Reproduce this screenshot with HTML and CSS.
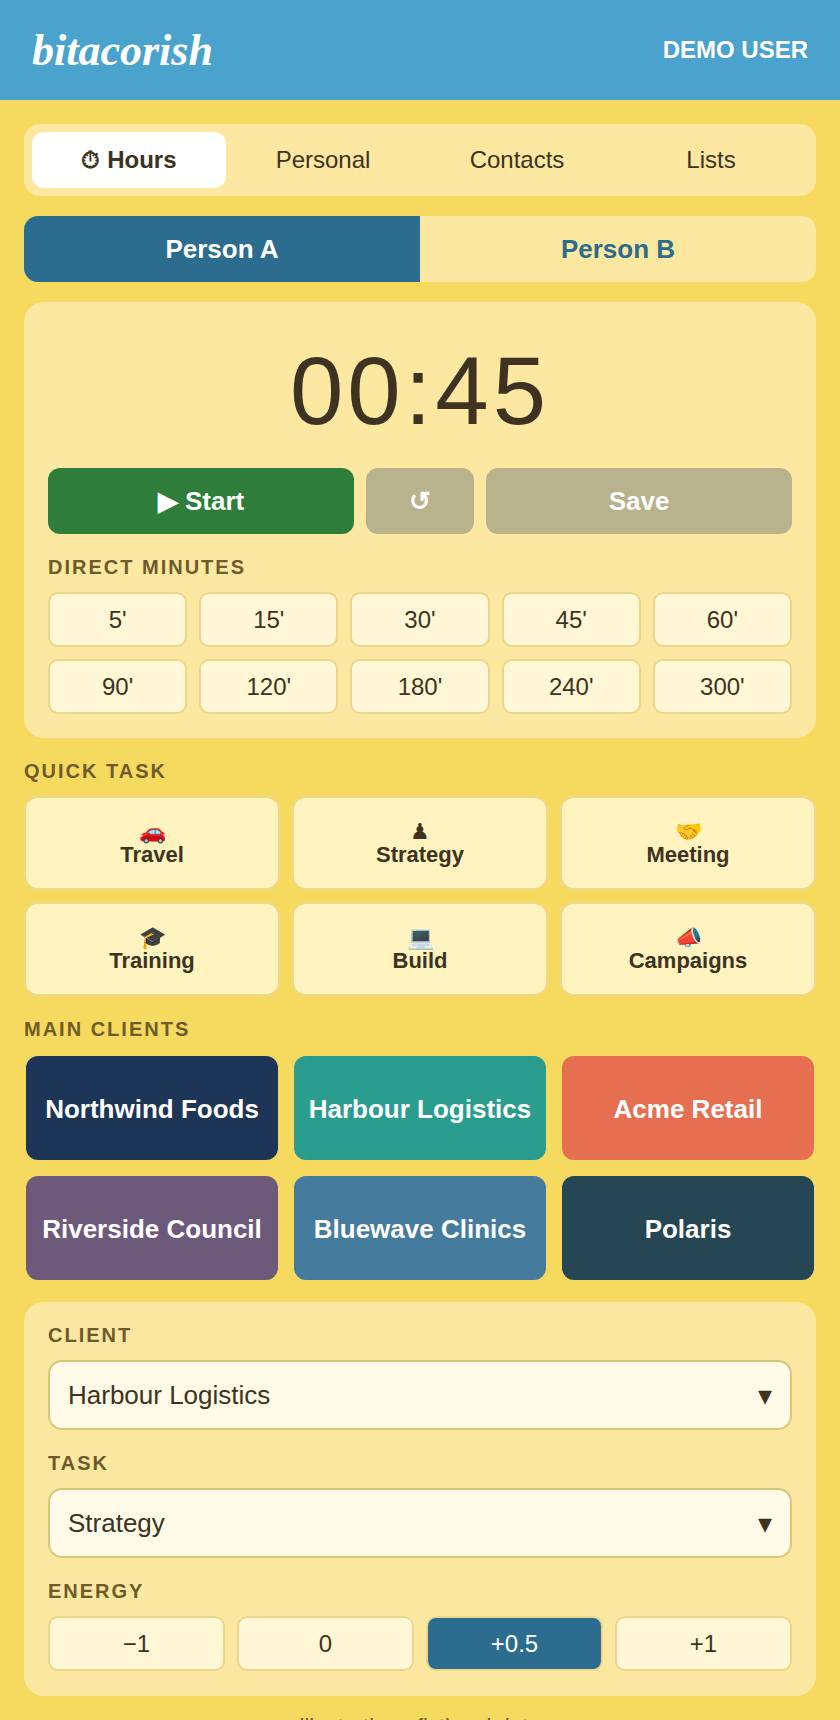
FILE: index.html
```html
<!DOCTYPE html>
<html lang="en">
<head>
  <meta charset="UTF-8" />
  <meta name="viewport" content="width=device-width, initial-scale=1.0" />
  <title>bitacorish</title>
  <link rel="stylesheet" href="styles.css">
</head>
<body>
  <header class="topbar">
    <div class="logo">bitacorish</div>
    <div class="user">DEMO USER</div>
  </header>

  <main class="page">
    <nav class="tabs">
      <a class="tab active">⏱ Hours</a>
      <a class="tab">Personal</a>
      <a class="tab">Contacts</a>
      <a class="tab">Lists</a>
    </nav>

    <div class="person-switch">
      <a class="person active">Person A</a>
      <a class="person">Person B</a>
    </div>

    <section class="card timer-card">
      <div class="timer">00:45</div>
      <div class="timer-actions">
        <button class="action start">▶ Start</button>
        <button class="action reset">↺</button>
        <button class="action save">Save</button>
      </div>
      <div class="label">DIRECT MINUTES</div>
      <div class="minutes">
        <button class="chip">5'</button>
        <button class="chip">15'</button>
        <button class="chip">30'</button>
        <button class="chip">45'</button>
        <button class="chip">60'</button>
        <button class="chip">90'</button>
        <button class="chip">120'</button>
        <button class="chip">180'</button>
        <button class="chip">240'</button>
        <button class="chip">300'</button>
      </div>
    </section>

    <div class="label">QUICK TASK</div>
    <div class="tasks">
      <button class="task"><span class="emoji">🚗</span>Travel</button>
      <button class="task"><span class="emoji">♟</span>Strategy</button>
      <button class="task"><span class="emoji">🤝</span>Meeting</button>
      <button class="task"><span class="emoji">🎓</span>Training</button>
      <button class="task"><span class="emoji">💻</span>Build</button>
      <button class="task"><span class="emoji">📣</span>Campaigns</button>
    </div>

    <div class="label">MAIN CLIENTS</div>
    <div class="clients">
      <button class="client navy">Northwind Foods</button>
      <button class="client teal">Harbour Logistics</button>
      <button class="client coral">Acme Retail</button>
      <button class="client plum">Riverside Council</button>
      <button class="client steel">Bluewave Clinics</button>
      <button class="client slate">Polaris</button>
    </div>

    <section class="card form-card">
      <div class="label">CLIENT</div>
      <div class="select"><span>Harbour Logistics</span><span class="caret">▾</span></div>
      <div class="label">TASK</div>
      <div class="select"><span>Strategy</span><span class="caret">▾</span></div>
      <div class="label">ENERGY</div>
      <div class="energy">
        <button class="chip">−1</button>
        <button class="chip">0</button>
        <button class="chip on">+0.5</button>
        <button class="chip">+1</button>
      </div>
    </section>

    <p class="note">illustrative · fictional data</p>
  </main>
</body>
</html>
```

FILE: styles.css
```css
* {
  box-sizing: border-box;
}
html, body {
  height: 100%;
}
body {
  font-family: "Liberation Sans", Arial, sans-serif;
  background-color: #f6da5f;
  color: #3d3320;
  margin: 0;
  overflow: hidden;
}
button {
  font-family: inherit;
  color: inherit;
  cursor: pointer;
}
.topbar {
  height: 100px;
  background-color: #4aa3cd;
  color: white;
  padding: 0 32px;
  display: flex;
  align-items: center;
  justify-content: space-between;
}
.logo {
  font-family: "Liberation Serif", serif;
  font-style: italic;
  font-weight: bold;
  font-size: 44px;
}
.user {
  font-size: 24px;
  font-weight: bold;
}
.page {
  padding: 24px 24px 0;
}
.tabs {
  display: grid;
  grid-template-columns: repeat(4, 1fr);
  padding: 8px;
  background-color: #fce8a0;
  border-radius: 16px;
  margin-bottom: 20px;
}
.tab {
  height: 56px;
  display: flex;
  align-items: center;
  justify-content: center;
  font-size: 24px;
  border-radius: 12px;
}
.tab.active {
  background-color: white;
  font-weight: bold;
}
.person-switch {
  display: grid;
  grid-template-columns: 1fr 1fr;
  height: 66px;
  background-color: #fce8a0;
  border-radius: 14px;
  overflow: hidden;
  margin-bottom: 20px;
}
.person {
  display: flex;
  align-items: center;
  justify-content: center;
  font-size: 26px;
  font-weight: bold;
  color: #2b6c8f;
}
.person.active {
  background-color: #2b6c8f;
  color: white;
}
.card {
  background-color: #fce8a0;
  border-radius: 20px;
  padding: 24px;
}
.timer {
  font-size: 96px;
  line-height: 110px;
  letter-spacing: 4px;
  text-align: center;
  margin: 10px 0 22px;
}
.timer-actions {
  display: grid;
  grid-template-columns: 1fr 108px 1fr;
  gap: 12px;
  margin-bottom: 20px;
}
.action {
  height: 66px;
  border: none;
  border-radius: 12px;
  color: white;
  font-size: 26px;
  font-weight: bold;
  background-color: #b8b28d;
}
.action.start {
  background-color: #2e7d3a;
}
.label {
  font-size: 20px;
  font-weight: bold;
  letter-spacing: 2px;
  color: #6e5a2a;
  line-height: 26px;
  margin-bottom: 12px;
}
.minutes {
  display: grid;
  grid-template-columns: repeat(5, 1fr);
  gap: 12px;
}
.chip {
  height: 55px;
  background-color: #fff7d6;
  border: 2px solid #ecd68c;
  border-radius: 10px;
  font-size: 24px;
}
.tasks {
  display: grid;
  grid-template-columns: repeat(3, 1fr);
  gap: 12px;
  margin-bottom: 20px;
}
.task {
  height: 94px;
  background-color: #fff3bf;
  border: 2px solid #eed98a;
  border-radius: 14px;
  font-size: 22px;
  font-weight: bold;
  line-height: 23px;
}
.emoji {
  display: block;
  font-weight: normal;
}
.timer-card {
  margin-bottom: 20px;
}
.clients {
  display: grid;
  grid-template-columns: repeat(3, 1fr);
  gap: 12px;
  margin-bottom: 20px;
}
.client {
  height: 108px;
  border: 2px solid #f6da5f;
  border-radius: 14px;
  color: white;
  font-size: 26px;
  font-weight: bold;
  padding: 2px 0 0;
}
.navy { background-color: #1d3557; }
.teal { background-color: #2a9d8f; }
.coral { background-color: #e76f51; }
.plum { background-color: #6d5a7a; }
.steel { background-color: #457b9d; }
.slate { background-color: #264653; }
.form-card {
  padding: 20px 24px 25px;
}
.select {
  height: 70px;
  display: flex;
  align-items: center;
  justify-content: space-between;
  padding: 0 18px;
  background-color: #fffbe8;
  border: 2px solid #d9c77a;
  border-radius: 14px;
  font-size: 26px;
  margin-bottom: 20px;
}
.caret {
  font-size: 28px;
}
.energy {
  display: grid;
  grid-template-columns: repeat(4, 1fr);
  gap: 12px;
}
.chip.on {
  background-color: #2b6c8f;
  color: white;
}
.note {
  margin: 18px 0 0;
  text-align: center;
  font-size: 22px;
  color: #6e5a2a;
}
```
